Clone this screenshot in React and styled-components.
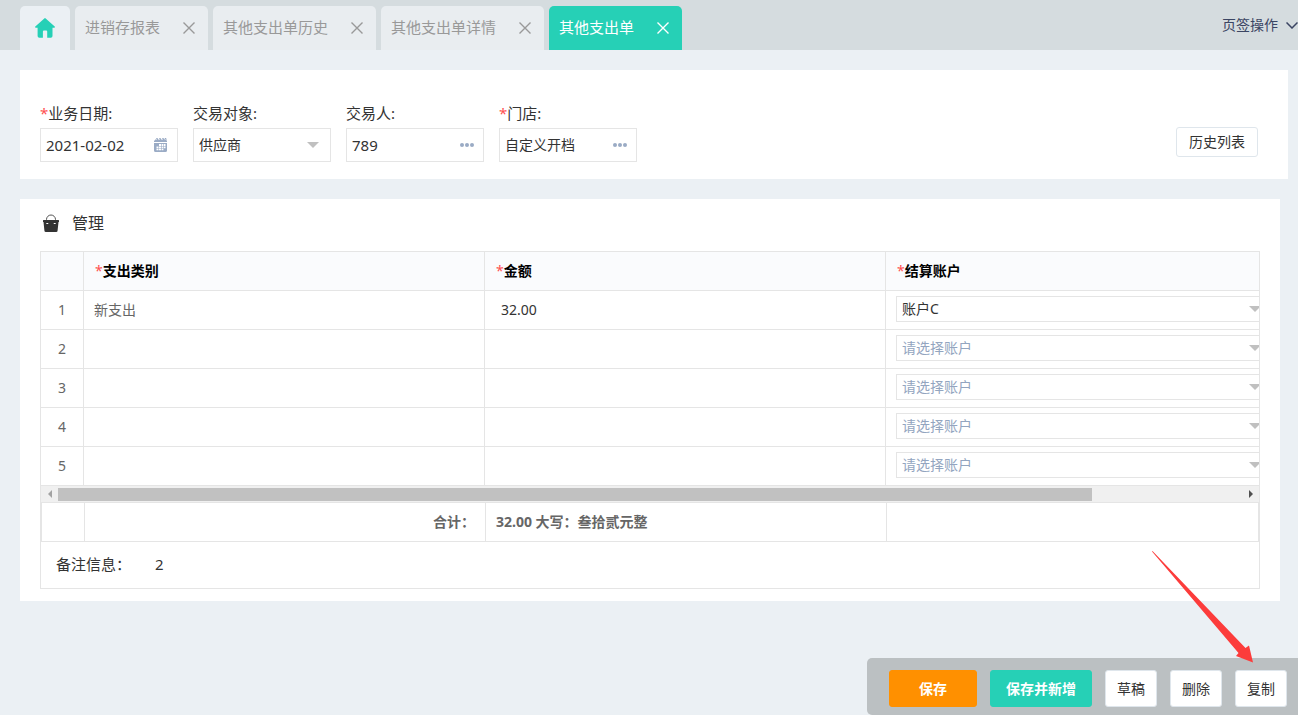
import React, { useState } from 'react';
import styled, { createGlobalStyle } from 'styled-components';

const tabs = [
  { id: 'report', title: '进销存报表' },
  { id: 'history', title: '其他支出单历史' },
  { id: 'detail', title: '其他支出单详情' },
  { id: 'expense', title: '其他支出单' }
];

const initialRows = [
  { id: 1, category: '新支出', amount: '32.00', account: 'c' },
  { id: 2, category: '', amount: '', account: '' },
  { id: 3, category: '', amount: '', account: '' },
  { id: 4, category: '', amount: '', account: '' },
  { id: 5, category: '', amount: '', account: '' }
];

const CloseIcon = () => (
  <svg viewBox="0 0 12 12" width="12" height="12" fill="none" stroke="currentColor" strokeWidth="1.4">
    <path d="M0.5 0.5 11.5 11.5M11.5 0.5 0.5 11.5" />
  </svg>
);

const HomeIcon = () => (
  <svg viewBox="0 0 20 20" width="20" height="20" fill="currentColor">
    <path d="M9.3 0.4a1 1 0 0 1 1.4 0L19.7 8.4c.5.5.2 1.3-.5 1.3H17.5v8.3a1.7 1.7 0 0 1-1.7 1.7H12.2V13.4a1 1 0 0 0-1-1H8.9a1 1 0 0 0-1 1v6.3H4.3a1.7 1.7 0 0 1-1.7-1.7V9.7H.8c-.7 0-1-.8-.5-1.3z" />
  </svg>
);

const CalendarIcon = () => (
  <svg viewBox="0 0 14 15" width="14" height="15">
    <path fill="#9aabc5" d="M0 5h13v7.5a1.5 1.5 0 0 1-1.5 1.5h-10A1.5 1.5 0 0 1 0 12.5zM0 4V3l1-1h11l1 1v1z" />
    <path fill="none" stroke="#9aabc5" strokeWidth="1" d="M1.5 2.5 2.5.5h1v2M4.5 2.5l1-2h1v2M7.5 2.5l1-2h1v2M10.5 2.5l.5-2h1v2" />
    <path fill="#fff" d="M5 6h2v2H5zM7.6 6h1.8v2H7.6zM10 6h1.5v2H10zM2.5 8.6h2v1.6h-2zM5 8.6h2v1.6H5zM7.6 8.6h1.8v1.6H7.6zM10 8.6h1.5v1.6H10zM2.5 10.8h2v1.5h-2zM5 10.8h2v1.5H5zM7.6 10.8h1.8v1.5H7.6z" />
  </svg>
);

const DotsIcon = () => (
  <svg viewBox="0 0 14 4" width="14" height="4" fill="#9aabc5">
    <circle cx="2" cy="2" r="2" />
    <circle cx="7" cy="2" r="2" />
    <circle cx="12" cy="2" r="2" />
  </svg>
);

const CaretIcon = () => (
  <svg viewBox="0 0 12 6" width="12" height="6" fill="#c0c0c0">
    <path d="M0 0h12L6 6z" />
  </svg>
);

const BasketIcon = () => (
  <svg viewBox="0 0 16 18" width="16" height="18">
    <path fill="none" stroke="#555" strokeWidth="1" d="M3.5 6V5.5a4.500 4.500 0 0 1 9 0v.5" />
    <path fill="#333" d="M.5 6h15a.5.5 0 0 1 .5.5V8h-.5L14.6 16.500a1.500 1.500 0 0 1-1.500 1.500H2.900a1.500 1.500 0 0 1-1.500-1.500L.5 8H0V6.500A.5.5 0 0 1 .5 6z" />
    <path stroke="#fff" strokeWidth="1.2" strokeLinecap="round" d="M3.800 9.500h1M11.200 9.500h1" />
  </svg>
);

const App = () => {
  const [active, setActive] = useState('expense');
  const [rows, setRows] = useState(initialRows);

  const setAccount = (id, account) => {
    setRows(rows.map((row) => (row.id === id ? { ...row, account } : row)));
  };

  return (
    <Page>
      <GlobalStyle />
      <TabBar>
        <HomeTab type="button" aria-label="首页">
          <HomeIcon />
        </HomeTab>
        {tabs.map((tab) => (
          <Tab key={tab.id} $active={tab.id === active}>
            <TabTitle type="button" onClick={() => setActive(tab.id)}>{tab.title}</TabTitle>
            <IconButton type="button" aria-label="关闭">
              <CloseIcon />
            </IconButton>
          </Tab>
        ))}
        <TabMenu type="button">
          页签操作
          <svg viewBox="0 0 12 7" width="12" height="7" fill="none" stroke="currentColor" strokeWidth="1.5">
            <path d="M0.5 0.5 6 6 11.5 0.5" />
          </svg>
        </TabMenu>
      </TabBar>

      <Content>
        <FilterPanel>
          <Field>
            <label htmlFor="date"><Star>*</Star>业务日期:</label>
            <Control>
              <TextInput id="date" defaultValue="2021-02-02" $large />
              <IconButton type="button" aria-label="选择日期"><CalendarIcon /></IconButton>
            </Control>
          </Field>
          <Field>
            <label htmlFor="target">交易对象:</label>
            <SelectControl>
              <Select id="target" defaultValue="supplier">
                <option value="supplier">供应商</option>
              </Select>
              <CaretIcon />
            </SelectControl>
          </Field>
          <Field>
            <label htmlFor="trader">交易人:</label>
            <Control>
              <TextInput id="trader" defaultValue="789" $large />
              <IconButton type="button" aria-label="选择交易人"><DotsIcon /></IconButton>
            </Control>
          </Field>
          <Field>
            <label htmlFor="store"><Star>*</Star>门店:</label>
            <Control>
              <TextInput id="store" defaultValue="自定义开档" />
              <IconButton type="button" aria-label="选择门店"><DotsIcon /></IconButton>
            </Control>
          </Field>
          <HistoryButton type="button">历史列表</HistoryButton>
        </FilterPanel>

        <ManagePanel>
          <PanelTitle>
            <BasketIcon />
            <h2>管理</h2>
          </PanelTitle>
          <Sheet>
            <Table>
              <Columns />
              <thead>
                <tr>
                  <th />
                  <th><Star>*</Star>支出类别</th>
                  <th><Star>*</Star>金额</th>
                  <th><Star>*</Star>结算账户</th>
                </tr>
              </thead>
              <tbody>
                {rows.map((row) => (
                  <tr key={row.id}>
                    <IndexCell>{row.id}</IndexCell>
                    <td>{row.category}</td>
                    <AmountCell>{row.amount}</AmountCell>
                    <AccountCell>
                      <AccountBox>
                        <Select
                          aria-label="结算账户"
                          value={row.account}
                          $empty={!row.account}
                          onChange={(e) => setAccount(row.id, e.target.value)}
                        >
                          <option value="">请选择账户</option>
                          <option value="c">账户C</option>
                        </Select>
                        <CaretIcon />
                      </AccountBox>
                    </AccountCell>
                  </tr>
                ))}
              </tbody>
            </Table>
            <ScrollBar>
              <ScrollArrow><svg viewBox="0 0 4 8" width="4" height="8" fill="#a3a3a3"><path d="M4 0v8L0 4z" /></svg></ScrollArrow>
              <ScrollTrack><ScrollThumb /></ScrollTrack>
              <ScrollArrow><svg viewBox="0 0 4 8" width="4" height="8" fill="#505050"><path d="M0 0v8l4-4z" /></svg></ScrollArrow>
            </ScrollBar>
            <TotalTable>
              <Columns />
              <tbody>
                <tr>
                  <td />
                  <TotalLabel>合计：</TotalLabel>
                  <td>32.00 大写：叁拾贰元整</td>
                  <td />
                </tr>
              </tbody>
            </TotalTable>
            <Remark>
              <label htmlFor="remark">备注信息：</label>
              <TextInput id="remark" defaultValue="2" $large />
            </Remark>
          </Sheet>
        </ManagePanel>
      </Content>

      <ActionBar>
        <ActionButton type="button" $color="#ff9000" $width={88}>保存</ActionButton>
        <ActionButton type="button" $color="#26d0b6" $width={102}>保存并新增</ActionButton>
        <ActionButton type="button">草稿</ActionButton>
        <ActionButton type="button">删除</ActionButton>
        <ActionButton type="button">复制</ActionButton>
      </ActionBar>
      <Pointer viewBox="0 0 102 112" width="102" height="112">
        <path fill="#fc3c3b" d="M0 0.500 0.500 0 93.500 97l3.500-2.500 4 17-17-6.500 2.500-3z" />
      </Pointer>
    </Page>
  );
};

const Columns = () => (
  <colgroup>
    <NarrowCol />
    <WideCol />
    <WideCol />
    <col />
  </colgroup>
);

// Styled Components
const GlobalStyle = createGlobalStyle`
  * {
    box-sizing: border-box;
  }

  body {
    margin: 0;
    background: #ebf0f4;
    color: #333;
    font: 14px/20px "Noto Sans", "Noto Sans CJK SC", sans-serif;
  }

  button, input, select {
    font: inherit;
    color: inherit;
  }

  svg {
    display: block;
    flex-shrink: 0;
  }
`;

const Page = styled.div`
  position: relative;
  min-height: 100vh;
`;

const TabBar = styled.nav`
  display: flex;
  gap: 5px;
  height: 50px;
  padding: 6px 0 0 20px;
  background: #d5dcdf;
`;

const HomeTab = styled.button`
  display: flex;
  align-items: center;
  justify-content: center;
  width: 50px;
  padding: 0;
  border: none;
  border-radius: 5px 5px 0 0;
  background: #ebf0f4;
  color: #26d0b6;
  cursor: pointer;
`;

const Tab = styled.div`
  display: flex;
  align-items: center;
  justify-content: space-between;
  gap: 23px;
  padding: 0 13px 0 10px;
  border-radius: 5px 5px 0 0;
  background: ${props => (props.$active ? '#26d0b6' : '#e9edf0')};
  color: ${props => (props.$active ? '#fff' : '#999')};
`;

const TabTitle = styled.button`
  padding: 0 0 2px;
  border: none;
  background: none;
  font-size: 15px;
  white-space: nowrap;
  cursor: pointer;
`;

const IconButton = styled.button`
  padding: 0;
  border: none;
  background: none;
  cursor: pointer;
`;

const TabMenu = styled.button`
  display: flex;
  align-items: center;
  gap: 8px;
  height: 38px;
  margin-left: auto;
  padding: 0;
  border: none;
  background: none;
  color: #3b4563;
  white-space: nowrap;
  cursor: pointer;
`;

const Content = styled.main`
  padding: 20px 10px 114px 20px;
`;

const FilterPanel = styled.section`
  display: flex;
  align-items: flex-end;
  gap: 15px;
  padding: 30px 30px 17px 20px;
  background: #fff;
`;

const Field = styled.div`
  width: 138px;

  label {
    display: block;
    margin-bottom: 2px;
    font-size: 15px;
    line-height: 26px;
  }
`;

const Star = styled.span`
  color: #ff5050;
  font-weight: 400;
`;

const Control = styled.div`
  display: flex;
  align-items: center;
  height: 34px;
  padding: 0 9px 0 5px;
  border: 1px solid #e5e5e5;
`;

const SelectControl = styled(Control)`
  padding-right: 11px;
`;

const TextInput = styled.input`
  flex: 1;
  min-width: 0;
  padding: 0;
  border: none;
  outline: none;
  background: none;
  font-size: ${props => (props.$large ? '15px' : '14px')};
`;

const Select = styled.select`
  flex: 1;
  min-width: 0;
  padding: 0;
  border: none;
  outline: none;
  appearance: none;
  background: none;
  color: ${props => (props.$empty ? '#93a5c0' : '#333')};
`;

const HistoryButton = styled.button`
  width: 82px;
  height: 30px;
  margin: 0 0 5px auto;
  padding: 0;
  border: 1px solid #dfe6ec;
  border-radius: 3px;
  background: #fff;
  cursor: pointer;
`;

const ManagePanel = styled.section`
  margin: 20px 8px 0 0;
  padding: 0 20px 12px;
  background: #fff;
`;

const PanelTitle = styled.div`
  display: flex;
  align-items: center;
  gap: 13px;
  height: 52px;
  padding: 0 3px 4px;

  h2 {
    margin: 0;
    font-size: 16px;
    font-weight: 400;
  }
`;

const Sheet = styled.div`
  border: 1px solid #e5e5e5;
`;

const NarrowCol = styled.col`
  width: 43px;
`;

const WideCol = styled.col`
  width: 401px;
`;

const Table = styled.table`
  width: 100%;
  table-layout: fixed;
  border-spacing: 0;

  th, td {
    height: 39px;
    padding: 0 10px;
    border: solid #e5e5e5;
    border-width: 0 1px 1px 0;
    color: #666;
    text-align: left;
  }

  th {
    padding: 0 11px;
    background: #fafbfd;
    color: #000;
    font-weight: 700;
  }

  th:last-child, td:last-child {
    border-right: none;
  }
`;

const IndexCell = styled.td`
  && {
    padding: 0;
    text-align: center;
  }
`;

const AmountCell = styled.td`
  && {
    padding-left: 16px;
    color: #333;
  }
`;

const AccountCell = styled.td`
  && {
    padding: 5px 0 0 10px;
    vertical-align: top;
    overflow: hidden;
  }
`;

/* runs past the cell, the sheet is scrolled sideways */
const AccountBox = styled.div`
  display: flex;
  align-items: center;
  width: calc(100% + 12px);
  height: 26px;
  padding: 0 9px 0 5px;
  border: 1px solid #e5e5e5;
`;

const ScrollBar = styled.div`
  display: flex;
  height: 16px;
  background: #f0f0f0;
`;

const ScrollArrow = styled.span`
  display: flex;
  align-items: center;
  justify-content: center;
  width: 17px;
`;

const ScrollTrack = styled.div`
  flex: 1;
  padding: 2px 0 1px;
`;

const ScrollThumb = styled.div`
  width: 87.3%;
  height: 13px;
  background: #c1c1c1;
`;

const TotalTable = styled(Table)`
  border: solid #e5e5e5;
  border-width: 1px 1px 0;

  td {
    font-weight: 700;
  }
`;

const TotalLabel = styled.td`
  && {
    text-align: right;
  }
`;

const Remark = styled.div`
  display: flex;
  align-items: center;
  gap: 24px;
  height: 46px;
  padding: 0 15px 2px;

  label {
    font-size: 15px;
  }
`;

const ActionBar = styled.footer`
  position: fixed;
  right: 0;
  bottom: 0;
  display: flex;
  gap: 13px;
  padding: 12px 11px 8px 22px;
  border-radius: 5px 0 0 5px;
  background: #bbc0c2;
`;

const ActionButton = styled.button`
  width: ${props => props.$width || 52}px;
  height: 37px;
  padding: 0;
  border: 1px solid ${props => props.$color || '#dfe6ec'};
  border-radius: 3px;
  background: ${props => props.$color || '#fff'};
  color: ${props => (props.$color ? '#fff' : '#333')};
  font-weight: ${props => (props.$color ? 700 : 400)};
  cursor: pointer;
`;

const Pointer = styled.svg`
  position: fixed;
  right: 44px;
  bottom: 52px;
  pointer-events: none;
`;

export default App;
